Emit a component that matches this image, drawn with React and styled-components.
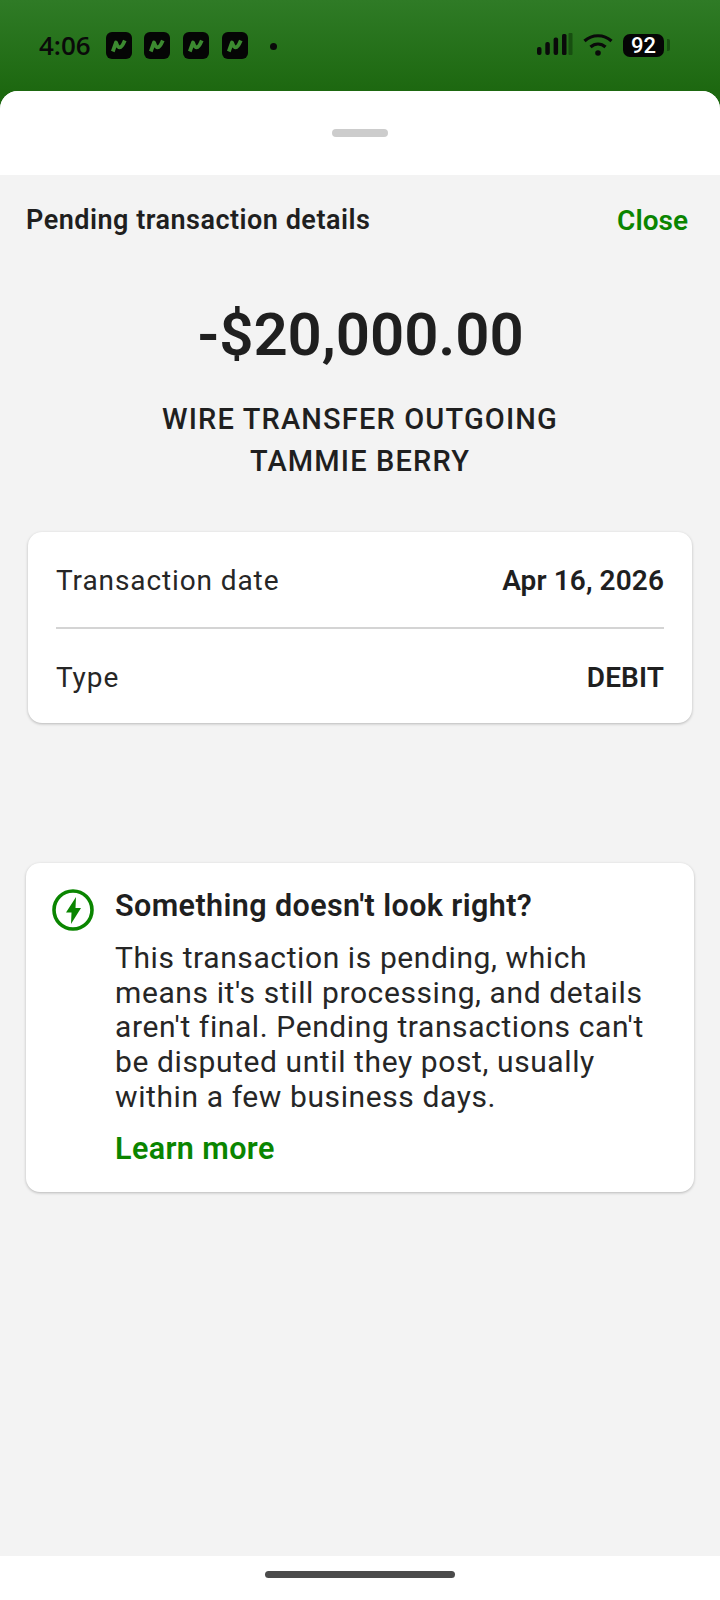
import React from "react";
import styled, { createGlobalStyle } from "styled-components";

const Global = createGlobalStyle`
  html, body { margin: 0; padding: 0; background: #f3f3f3; }
  body { font-family: Roboto, "Noto Sans", sans-serif; color: #1f1f1f; }
`;
const Page = styled.div`
  width: 720px; height: 1600px; display: flex; flex-direction: column;
  background: #f3f3f3; overflow: hidden; position: relative;
`;
const StatusBar = styled.div`
  height: 110px; margin-bottom: -19px; flex: none; display: flex; align-items: flex-start; justify-content: space-between;
  padding: 32px 50px 0 39px; box-sizing: border-box; color: #0a0a0a;
  background: linear-gradient(180deg, #2f7b26 0%, #1d6810 82%);
`;
const StatusLeft = styled.div`display: flex; align-items: center; gap: 12.7px; height: 27px;`;
const StatusRight = styled.div`display: flex; align-items: center; height: 24px; gap: 10px; padding-top: 1px;`;
const Time = styled.span`font: 600 26px "Open Sans", Roboto, sans-serif; width: 54px; line-height: 27px;`;
const Dot = styled.span`width: 7px; height: 7px; border-radius: 50%; background: #0a0a0a; margin-left: 9.5px; margin-top: 1px;`;
const Battery = styled.div`display: flex; align-items: center; gap: 3px;`;
const BatteryBody = styled.div`
  width: 41px; height: 23px; border-radius: 7px; background: #050505; color: #fff;
  display: flex; align-items: center; justify-content: center;
  font: 500 22px Roboto, sans-serif;
`;
const BatteryTip = styled.div`width: 3px; height: 12px; border-radius: 0 2px 2px 0; background: #174f10;`;
const Sheet = styled.div`
  flex: 1; display: flex; flex-direction: column; background: #f3f3f3; position: relative;
  border-radius: 18px 18px 0 0; overflow: hidden;
`;
const Grabber = styled.div`
  height: 84px; flex: none; background: #fff; display: flex; justify-content: center; padding-top: 38px; box-sizing: border-box;
  &::before { content: ""; width: 56px; height: 8px; border-radius: 4px; background: #cccccc; }
`;
const Body = styled.div`flex: 1; display: flex; flex-direction: column; padding: 0 26px;`;
const Header = styled.div`display: flex; justify-content: space-between; align-items: center; height: 90px;`;
const Title = styled.h1`font-size: 27px; font-weight: 600; margin: 0; letter-spacing: 0.5px;`;
const CloseLink = styled.a`font-size: 28px; font-weight: 600; color: #0a8500; padding-right: 6px;`;
const Amount = styled.div`font-size: 60px; font-weight: 600; text-align: center; line-height: 70px; margin-top: 35px; letter-spacing: -0.1px; padding-left: 1px;`;
const Merchant = styled.div`font-size: 29px; font-weight: 500; text-align: center; line-height: 42px; margin-top: 28px; letter-spacing: 1.15px;`;
const Card = styled.div`
  background: #fff; border-radius: 14px; box-shadow: 0 1px 3px rgba(0,0,0,0.25);
`;
const DetailCard = styled(Card)`margin: 50px 2px 0; padding: 0 28px; height: 191px; display: flex; flex-direction: column;`;
const Row = styled.div`
  flex: 1; display: flex; justify-content: space-between; align-items: center; padding-top: 3px;
  & + & { border-top: 2px solid #d4d4d4; }
`;
const Label = styled.span`font-size: 28px; letter-spacing: 0.9px; color: #262626;`;
const Value = styled.span`font-size: 28px; font-weight: 600; letter-spacing: 0.1px;`;
const AlertCard = styled(Card)`margin-top: 140px; padding: 25px 24px 22px 26px; display: flex; gap: 21px; height: 329px; box-sizing: border-box;`;
const IconBox = styled.div`flex: none; width: 42px; height: 42px; margin-top: 1px;`;
const AlertContent = styled.div`display: flex; flex-direction: column;`;
const AlertTitle = styled.div`font-size: 30.5px; font-weight: 600; line-height: 36px; letter-spacing: 0.4px;`;
const AlertText = styled.p`font-size: 30px; line-height: 34.7px; margin: 17px 0 0; letter-spacing: 0.6px; color: #262626;`;
const LearnMore = styled.a`font-size: 30.5px; font-weight: 600; color: #0a8500; margin-top: 16px; line-height: 36px; letter-spacing: 0.4px;`;
const NavBar = styled.div`
  height: 44px; flex: none; background: #fff; display: flex; justify-content: center; padding-top: 15px; box-sizing: border-box;
  &::before { content: ""; width: 190px; height: 7px; border-radius: 4px; background: #4b4b4b; }
`;

const AppIcon = () => (
  <svg width="26" height="27" viewBox="0 0 26 27">
    <rect width="26" height="27" rx="6" fill="#050505" />
    <path d="M6.8 19.5 L10 10.5 C 12.2 16.5 14.8 18 18.8 8.5" fill="none" stroke="#3c8a30" strokeWidth="3.8" strokeLinejoin="round" />
  </svg>
);
const Signal = () => (
  <svg width="36" height="24" viewBox="0 0 36 24">
    <rect x="0" y="14" width="4.5" height="8" rx="2" fill="#0a0a0a" />
    <rect x="8.3" y="9" width="4.5" height="13" rx="2" fill="#0a0a0a" />
    <rect x="16.6" y="4.5" width="4.5" height="17.5" rx="2" fill="#0a0a0a" />
    <rect x="25" y="1" width="4.5" height="21" rx="1.5" fill="#0a0a0a" />
    <rect x="31.5" y="0" width="4" height="22" rx="1" fill="#174f10" />
  </svg>
);
const Wifi = () => (
  <svg width="30" height="24" viewBox="0 0 30 24" fill="none" stroke="#0a0a0a" strokeWidth="3.2">
    <path d="M1.5 8 C9.2 1 20.8 1 28.5 8" />
    <path d="M7.5 14 C12 10 18 10 22.5 14" />
    <circle cx="15" cy="20" r="2.8" fill="#0a0a0a" stroke="none" />
  </svg>
);
const Bolt = () => (
  <svg width="42" height="42" viewBox="0 0 42 42">
    <circle cx="21" cy="21" r="19" fill="none" stroke="#0a8500" strokeWidth="3.6" />
    <path d="M24 8 L14 23.5 H19.5 L19 35 L29 19 H23.5 Z" fill="#0a8500" />
  </svg>
);

export default function App() {
  return (
    <Page>
      <Global />
      <StatusBar>
        <StatusLeft>
          <Time>4:06</Time>
          <AppIcon /><AppIcon /><AppIcon /><AppIcon />
          <Dot />
        </StatusLeft>
        <StatusRight>
          <Signal /><Wifi />
          <Battery><BatteryBody>92</BatteryBody><BatteryTip /></Battery>
        </StatusRight>
      </StatusBar>
      <Sheet>
        <Grabber />
        <Body>
          <Header>
            <Title>Pending transaction details</Title>
            <CloseLink>Close</CloseLink>
          </Header>
          <Amount>-$20,000.00</Amount>
          <Merchant>WIRE TRANSFER OUTGOING<br />TAMMIE BERRY</Merchant>
          <DetailCard>
            <Row><Label>Transaction date</Label><Value>Apr 16, 2026</Value></Row>
            <Row><Label>Type</Label><Value>DEBIT</Value></Row>
          </DetailCard>
          <AlertCard>
            <IconBox><Bolt /></IconBox>
            <AlertContent>
              <AlertTitle>Something doesn't look right?</AlertTitle>
              <AlertText>This transaction is pending, which means it's still processing, and details aren't final. Pending transactions can't be disputed until they post, usually within a few business days.</AlertText>
              <LearnMore>Learn more</LearnMore>
            </AlertContent>
          </AlertCard>
        </Body>
        <NavBar />
      </Sheet>
    </Page>
  );
}
